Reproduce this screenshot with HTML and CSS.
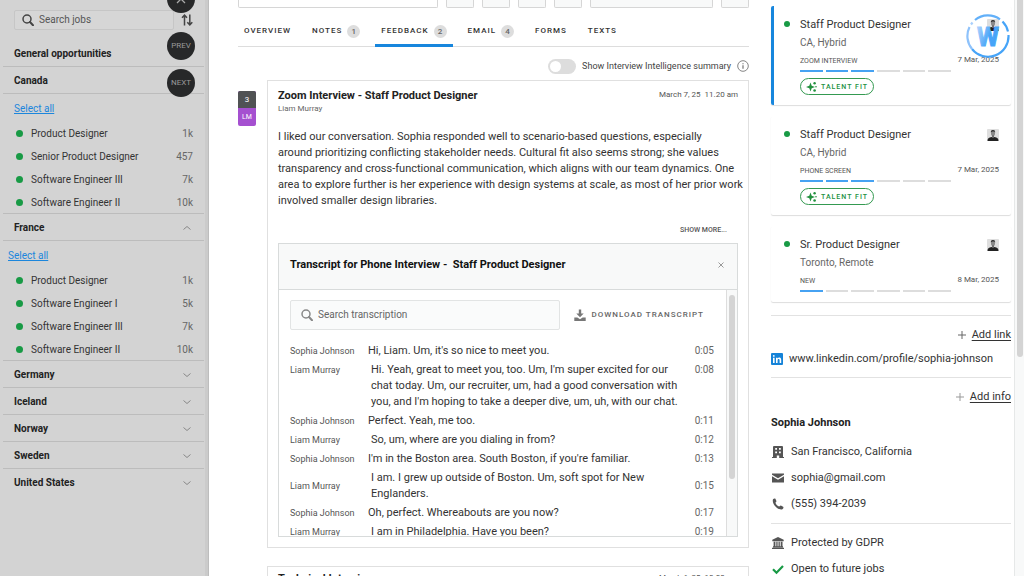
FILE: index.html
```
<!DOCTYPE html>
<html lang="en">
<head>
<meta charset="UTF-8">
<meta name="viewport" content="width=device-width, initial-scale=1.0">
<title>Sophia Johnson - Feedback</title>
<link rel="stylesheet" href="styles.css">
</head>
<body>

<!-- Shared icons -->
<svg class="sprite" aria-hidden="true">
  <symbol id="i-search" viewBox="0 0 12 12"><circle cx="5" cy="5" r="4" fill="none" stroke="currentColor" stroke-width="1.5"/><path d="M8 8l3 3.2" stroke="currentColor" stroke-width="2" stroke-linecap="round"/></symbol>
  <symbol id="i-down" viewBox="0 0 8 8"><path d="M.5 2.500l3.500 3 3.500-3" fill="none" stroke="currentColor"/></symbol>
  <symbol id="i-up" viewBox="0 0 8 8"><path d="M.5 5.500l3.500-3 3.500 3" fill="none" stroke="currentColor"/></symbol>
  <symbol id="i-avatar" viewBox="0 0 12 12"><rect width="12" height="12" rx="1" fill="#dedede"/><path d="M4 3.2C4 .4 8 .4 8 3.2V5c0 1-1 2.3-2 2.3S4 6 4 5z" fill="#8a8a8a"/><path d="M3.8 3.5C3.6.3 8.4.3 8.2 3.5L7.4 2.6H5z" fill="#2b2b2b"/><path d="M5.2 6.5h1.6v2H5.2z" fill="#555"/><path d="M.5 12c0-2.800 1.200-3.400 4.100-4l1.400.8L7.400 8c2.900.6 4.100 1.200 4.100 4z" fill="#222"/></symbol>
  <symbol id="i-spark" viewBox="0 0 12 12"><path d="M4.500 1.500l1.200 3.300L9 6 5.700 7.200 4.500 10.500 3.300 7.200 0 6l3.300-1.200z" fill="currentColor"/><circle cx="8.600" cy="2.300" r="1.200" fill="currentColor"/><circle cx="10" cy="5.800" r=".8" fill="currentColor"/><circle cx="8.600" cy="9.500" r="1.300" fill="currentColor"/></symbol>
</svg>

<div class="app">

  <aside class="sidebar">
    <div class="job-search">
      <label class="job-search-box">
        <svg class="icon-12"><use href="#i-search"/></svg>
        <input type="text" placeholder="Search jobs" aria-label="Search jobs">
      </label>
      <button class="sort" aria-label="Sort jobs">
        <svg viewBox="0 0 12 12" width="12" height="12"><path d="M3.500 11.500V1.200M1 3.800L3.500 1.200 6 3.800M8.800.5v10.300M6.300 8.200l2.500 2.600 2.500-2.600" fill="none" stroke="#444" stroke-width="1.500"/></svg>
      </button>
    </div>

    <button class="group">General opportunities</button>

    <button class="group">Canada</button>
    <div class="group-body">
      <a class="select-all" href="#">Select all</a>
      <ul>
        <li><i class="dot"></i>Product Designer<span>1k</span></li>
        <li><i class="dot"></i>Senior Product Designer<span>457</span></li>
        <li><i class="dot"></i>Software Engineer III<span>7k</span></li>
        <li><i class="dot"></i>Software Engineer II<span>10k</span></li>
      </ul>
    </div>

    <button class="group">France <svg class="icon-8"><use href="#i-up"/></svg></button>
    <div class="group-body">
      <a class="select-all outdent" href="#">Select all</a>
      <ul>
        <li><i class="dot"></i>Product Designer<span>1k</span></li>
        <li><i class="dot"></i>Software Engineer I<span>5k</span></li>
        <li><i class="dot"></i>Software Engineer III<span>7k</span></li>
        <li><i class="dot"></i>Software Engineer II<span>10k</span></li>
      </ul>
    </div>

    <button class="group">Germany <svg class="icon-8"><use href="#i-down"/></svg></button>
    <button class="group">Iceland <svg class="icon-8"><use href="#i-down"/></svg></button>
    <button class="group">Norway <svg class="icon-8"><use href="#i-down"/></svg></button>
    <button class="group">Sweden <svg class="icon-8"><use href="#i-down"/></svg></button>
    <button class="group last">United States <svg class="icon-8"><use href="#i-down"/></svg></button>

    <!-- Floating candidate navigation -->
    <div class="pager">
      <button class="close-btn" aria-label="Close"><svg viewBox="0 0 10 10" width="10" height="10"><path d="M1 1l8 8M9 1L1 9" stroke="#aaa" stroke-width="1.300"/></svg></button>
      <button>PREV</button>
      <button>NEXT</button>
    </div>
  </aside>

  <main class="main">
    <div class="toolbar">
      <input class="tool-field" type="text" aria-label="Stage">
      <button class="tool" aria-label="Email"></button>
      <button class="tool" aria-label="Schedule"></button>
      <button class="tool" aria-label="Share"></button>
      <button class="tool" aria-label="Print"></button>
      <button class="tool wide" aria-label="Move"></button>
      <button class="tool" aria-label="More"></button>
    </div>

    <nav class="tabs">
      <a href="#">OVERVIEW</a>
      <a href="#">NOTES<span class="count">1</span></a>
      <a class="active" href="#">FEEDBACK<span class="count">2</span></a>
      <a href="#">EMAIL<span class="count">4</span></a>
      <a href="#">FORMS</a>
      <a href="#">TEXTS</a>
    </nav>

    <div class="summary-toggle">
      <input type="checkbox" id="summary" class="switch">
      <label for="summary">Show Interview Intelligence summary</label>
      <svg viewBox="0 0 12 12" width="12" height="12"><circle cx="6" cy="6" r="5.300" fill="none" stroke="#777" stroke-width=".9"/><path d="M6 5.200v3.500M6 3.200v1" stroke="#666" stroke-width="1.100"/></svg>
    </div>

    <div class="feed">
      <div class="score"><b>3</b><span>LM</span></div>

      <article class="card">
        <header class="card-head">
          <div>
            <h2>Zoom Interview - Staff Product Designer</h2>
            <p class="author">Liam Murray</p>
          </div>
          <time>March 7, 25&nbsp; 11.20 am</time>
        </header>
        <p class="note">I liked our conversation. Sophia responded well to scenario-based questions, especially<br>
          around prioritizing conflicting stakeholder needs. Cultural fit also seems strong; she values<br>
          transparency and cross-functional communication, which aligns with our team dynamics. One<br>
          area to explore further is her experience with design systems at scale, as most of her prior work<br>
          involved smaller design libraries.</p>
        <button class="more">SHOW MORE...</button>

        <section class="transcript">
          <header class="transcript-head">
            <h3>Transcript for Phone Interview -&nbsp; Staff Product Designer</h3>
            <button aria-label="Close transcript"><svg viewBox="0 0 8 8" width="8" height="8"><path d="M1.500 1.500l5 5M6.500 1.500l-5 5" stroke="#999"/></svg></button>
          </header>
          <div class="transcript-view">
            <div class="transcript-body">
              <div class="tools">
                <label class="find">
                  <svg class="icon-12"><use href="#i-search"/></svg>
                  <input type="text" placeholder="Search transcription" aria-label="Search transcription">
                </label>
                <button class="download">
                  <svg viewBox="0 0 12 12" width="12" height="12"><path d="M4.800.5h2.400v4h2.500L6 8.300 2.300 4.500h2.500z" fill="#777"/><path d="M.3 8.500h3L6 10.200l2.700-1.700h3V12H.3z" fill="#777"/></svg>
                  DOWNLOAD TRANSCRIPT
                </button>
              </div>
              <div class="line"><span>Sophia Johnson</span><p>Hi, Liam. Um, it's so nice to meet you.</p><time>0:05</time></div>
              <div class="line liam"><span>Liam Murray</span><p>Hi. Yeah, great to meet you, too. Um, I'm super excited for our chat today. Um, our recruiter, um, had a good conversation with you, and I'm hoping to take a deeper dive, um, uh, with our chat.</p><time>0:08</time></div>
              <div class="line"><span>Sophia Johnson</span><p>Perfect. Yeah, me too.</p><time>0:11</time></div>
              <div class="line liam"><span>Liam Murray</span><p>So, um, where are you dialing in from?</p><time>0:12</time></div>
              <div class="line"><span>Sophia Johnson</span><p>I'm in the Boston area. South Boston, if you're familiar.</p><time>0:13</time></div>
              <div class="line liam middle"><span>Liam Murray</span><p>I am. I grew up outside of Boston. Um, soft spot for New Englanders.</p><time>0:15</time></div>
              <div class="line"><span>Sophia Johnson</span><p>Oh, perfect. Whereabouts are you now?</p><time>0:17</time></div>
              <div class="line liam"><span>Liam Murray</span><p>I am in Philadelphia. Have you been?</p><time>0:19</time></div>
            </div>
            <div class="track"><div class="thumb"></div></div>
          </div>
        </section>
      </article>

      <article class="card next">
        <header class="card-head">
          <h2>Technical Interview</h2>
          <time>March 6, 25&nbsp; 10.00 am</time>
        </header>
      </article>
    </div>
  </main>

  <aside class="profile">
    <div class="profile-body">
      <div class="job current">
        <i class="dot"></i>
        <div class="job-info">
          <div class="job-row"><h4>Staff Product Designer</h4><svg class="icon-12"><use href="#i-avatar"/></svg></div>
          <p>CA, Hybrid</p>
          <div class="job-row">
            <div class="stage">ZOOM INTERVIEW<div class="steps"><i class="on"></i><i class="on"></i><i class="on"></i><i></i><i></i><i></i></div></div>
            <time>7 Mar, 2025</time>
          </div>
          <span class="fit"><svg class="icon-12"><use href="#i-spark"/></svg>TALENT FIT</span>
        </div>
      </div>

      <div class="job">
        <i class="dot"></i>
        <div class="job-info">
          <div class="job-row"><h4>Staff Product Designer</h4><svg class="icon-12"><use href="#i-avatar"/></svg></div>
          <p>CA, Hybrid</p>
          <div class="job-row">
            <div class="stage">PHONE SCREEN<div class="steps"><i class="on"></i><i class="on"></i><i class="on"></i><i></i><i></i><i></i></div></div>
            <time>7 Mar, 2025</time>
          </div>
          <span class="fit"><svg class="icon-12"><use href="#i-spark"/></svg>TALENT FIT</span>
        </div>
      </div>

      <div class="job compact">
        <i class="dot"></i>
        <div class="job-info">
          <div class="job-row"><h4>Sr. Product Designer</h4><svg class="icon-12"><use href="#i-avatar"/></svg></div>
          <p>Toronto, Remote</p>
          <div class="job-row">
            <div class="stage">NEW<div class="steps"><i class="on"></i><i></i><i></i><i></i><i></i><i></i></div></div>
            <time>8 Mar, 2025</time>
          </div>
        </div>
      </div>

      <div class="block">
        <div class="add"><svg viewBox="0 0 8 8" width="8" height="8"><path d="M4 0v8M0 4h8" stroke="#666"/></svg><a href="#">Add link</a></div>
        <div class="link">
          <svg viewBox="0 0 12 12" width="12" height="12"><rect width="12" height="12" rx="1" fill="#1583d8"/><path d="M2 4.700h1.600V10H2zM5 4.700h1.500v.7c.9-1.300 3.700-1.100 3.700 1.300V10H8.600V7.200c0-1.600-2-1.500-2 0V10H5z" fill="#fff"/><circle cx="2.800" cy="2.900" r=".9" fill="#fff"/></svg>
          <a href="#">www.linkedin.com/profile/sophia-johnson</a>
        </div>
      </div>

      <div class="block">
        <div class="add"><svg viewBox="0 0 8 8" width="8" height="8"><path d="M4 0v8M0 4h8" stroke="#999"/></svg><a href="#">Add info</a></div>
        <h3>Sophia Johnson</h3>
        <ul class="facts">
          <li><svg class="icon-12" viewBox="0 0 12 12"><path fill-rule="evenodd" d="M2 0h8q1 0 1 1v10h1v1H7.200V9.500H4.800V12H0v-1h1V1q0-1 1-1zM3.200 2v1.800H5V2zM7 2v1.800h1.800V2zM3.200 5.500v1.800H5V5.500zM7 5.500v1.800h1.800V5.500z" fill="#555"/></svg>San Francisco, California</li>
          <li><svg class="icon-12" viewBox="0 0 12 12"><path d="M0 1.500h12v1.300L6 6.300 0 2.800zM0 4.200l6 3.500 6-3.500v6.300H0z" fill="#555"/></svg>sophia@gmail.com</li>
          <li><svg class="icon-12" viewBox="0 0 12 12"><path d="M1 1.300C1.800.2 3 .2 3.400.8l1 2.300c.2.700-.9 1.200-.9 1.600.4 1.500 1.900 3.100 3.700 3.900.5 0 1-1.200 1.700-1l2.200 1.200c.8.500.2 1.700-.7 2.400C6 12.800-.6 5.500 1 1.300z" fill="#555"/></svg>(555) 394-2039</li>
        </ul>
      </div>

      <div class="block">
        <ul class="facts first">
          <li><svg class="icon-12" viewBox="0 0 12 12"><path d="M6 0l5.700 2.800v1.400H.3V2.800zM1.600 4.800h1.800v4.500H1.600zM4.300 4.800h1.300v4.500H4.300zM6.500 4.800h1.300v4.500H6.500zM8.700 4.800h1.800v4.500H8.700zM1 9.200h10v1.200H1zM0 10.800h12V12H0z" fill="#555"/></svg>Protected by GDPR</li>
          <li><svg class="icon-12" viewBox="0 0 12 12"><path d="M1 6.200l3.500 3.500L11 3" fill="none" stroke="#189a45" stroke-width="2.200"/></svg>Open to future jobs</li>
        </ul>
      </div>
    </div>
    <div class="page-track"><div class="page-thumb"></div></div>

    <svg class="brand" viewBox="0 0 44 44" role="img" aria-label="W">
      <defs><linearGradient id="blue" x1="0" y1="0" x2="1" y2=".5"><stop offset=".1" stop-color="#a9cffc"/><stop offset=".65" stop-color="#46a4f8"/></linearGradient></defs>
      <g fill="none" stroke-width="2.200">
        <path d="M9 6A20.500 20.500 0 0 1 34 5.400" stroke="#62b0f9"/>
        <path d="M36.500 7.500A20.500 20.500 0 0 1 42 17.500" stroke="#46a4f8"/>
        <path d="M42.500 21A20.500 20.500 0 0 1 6 35" stroke="#46a4f8"/>
        <path d="M6 35A20.500 20.500 0 0 1 3.500 13" stroke="#8ec2fb"/>
        <path d="M5 10.500l1.500-2" stroke="#a9cffc"/>
      </g>
      <text x="22" y="32" text-anchor="middle" fill="url(#blue)" stroke="url(#blue)">W</text>
    </svg>
  </aside>

</div>
</body>
</html>
```
FILE: styles.css
```
* {
  box-sizing: border-box;
}

body {
  margin: 0;
  font-family: Roboto, "Liberation Sans", sans-serif;
  font-size: 11px;
  line-height: 16px;
  color: #333;
  background: #fff;
}

h2, h3, h4, p, ul {
  margin: 0;
  padding: 0;
}

ul { list-style: none; }

button, input {
  font: inherit;
  color: inherit;
  background: none;
  border: 0;
  padding: 0;
}

input::placeholder { color: #666; opacity: 1; }

svg { flex: none; display: block; }
.sprite { position: absolute; width: 0; height: 0; }
.icon-12 { width: 12px; height: 12px; }
.icon-8 { width: 8px; height: 8px; }

.app {
  display: flex;
  height: 100vh;
  overflow: hidden;
}

/* Sidebar */
.sidebar {
  position: relative;
  flex: none;
  width: 209px;
  padding: 10px 4px 0 3px;
  background: #d3d3d3;
  border-right: 1px solid #bdbdbd;
  box-shadow: inset -3px 0 0 #cbcbcb;
  font-size: 10px;
}

.job-search {
  display: flex;
  align-items: center;
  gap: 7px;
  padding: 0 11px 10px;
}

.job-search-box {
  flex: 1;
  min-width: 0;
  display: flex;
  align-items: center;
  gap: 5px;
  height: 20px;
  padding: 0 7px;
  color: #444;
  background: #d6d6d6;
  border: 1px solid #c6c6c6;
  border-radius: 2px;
}
.job-search-box input { flex: 1; min-width: 0; }
.job-search-box input::placeholder { color: #555; }

.group {
  display: flex;
  align-items: center;
  justify-content: space-between;
  width: 100%;
  height: 27px;
  padding: 1px 13px 0 11px;
  border-bottom: 1px solid #bcbcbc;
  font-weight: 700;
  text-align: left;
  color: #222;
}
.group svg { color: #888; }
.group.last { border-bottom: 0; }

.group-body {
  height: 120px;
  border-bottom: 1px solid #bcbcbc;
}

.select-all {
  display: block;
  height: 28px;
  padding-left: 11px;
  line-height: 30px;
  color: #1c86dc;
}
.select-all.outdent { padding-left: 5px; }

.group-body li {
  display: flex;
  align-items: center;
  height: 23px;
  padding: 0 11px 0 13px;
}
.group-body li .dot { margin-right: 8px; }
.group-body li span {
  margin-left: auto;
  color: #666;
}

.dot {
  flex: none;
  width: 7px;
  height: 7px;
  border-radius: 50%;
  background: #189a45;
}

.pager {
  position: absolute;
  top: -15px;
  left: 167px;
  display: grid;
  gap: 9px;
}
.pager button {
  display: flex;
  align-items: center;
  justify-content: center;
  width: 28px;
  height: 28px;
  border-radius: 50%;
  background: #272829;
  color: #999;
  font-size: 8px;
}
.pager .close-btn { margin-bottom: 10px; }

/* Candidate */
.main {
  flex: 1;
  min-width: 0;
  padding-left: 29px;
}

.toolbar {
  display: flex;
  gap: 8px;
}
.tool, .tool-field {
  width: 28px;
  height: 8px;
  border: 1px solid #d6d6d6;
  border-top: 0;
  border-radius: 0 0 2px 2px;
  background: #f8f9f9;
}
.tool.wide { width: 123px; }
.tool-field { flex: 1; min-width: 0; background: #fff; }

.tabs {
  display: flex;
  gap: 9px;
  height: 39px;
  padding-top: 8px;
  border-bottom: 1px solid #ddd;
}
.tabs a {
  display: flex;
  align-items: center;
  padding: 2px 6px 0;
  height: 31px;
  border-bottom: 3px solid transparent;
  font-size: 8px;
  font-weight: 500;
  letter-spacing: 1px;
  color: #333;
  text-decoration: none;
}
.tabs .active { border-color: #1786dd; }
.count {
  width: 13px;
  height: 13px;
  margin-left: 5px;
  border-radius: 50%;
  background: #ddd;
  line-height: 13px;
  letter-spacing: 0;
  text-align: center;
  color: #666;
}

.summary-toggle {
  display: flex;
  align-items: center;
  justify-content: flex-end;
  gap: 6px;
  height: 33px;
  padding-top: 5px;
  font-size: 9px;
  color: #444;
}
.switch {
  appearance: none;
  width: 28px;
  height: 15px;
  margin: 0;
  padding: 2px;
  border-radius: 8px;
  background: #ddd;
}
.switch::before {
  content: '';
  display: block;
  width: 11px;
  height: 11px;
  border-radius: 50%;
  background: #fff;
}

.feed {
  display: grid;
  grid-template-columns: 18px minmax(0, 1fr);
  column-gap: 11px;
  row-gap: 18px;
}

.score {
  align-self: start;
  margin-top: 11px;
  border-radius: 2px;
  overflow: hidden;
  font-size: 8px;
  line-height: 17px;
  text-align: center;
  color: #fff;
  background: #a550d0;
}
.score b {
  display: block;
  font-weight: 400;
  background: #505254;
}
.score span { font-size: 7px; }

.card {
  padding: 7px 10px 10px;
  border: 1px solid #e0e0e0;
}
.card.next { grid-column: 2; height: 60px; padding-top: 4px; }

.card-head {
  display: flex;
  justify-content: space-between;
}
.card-head h2 {
  font-size: 11px;
  font-weight: 700;
  color: #222;
}
.card-head time { font-size: 8px; line-height: 14px; color: #555; }
.author {
  font-size: 8px;
  line-height: 9px;
  color: #666;
}

.note {
  margin-top: 16px;
  white-space: nowrap;
}

.more {
  display: block;
  margin: 13px 11px 5px auto;
  font-size: 7px;
  font-weight: 500;
  color: #555;
}

.transcript {
  border: 1px solid #d8dbdb;
}
.transcript-head {
  display: flex;
  align-items: center;
  justify-content: space-between;
  height: 46px;
  padding: 0 12px 4px 11px;
  background: #f8f9f9;
  border-bottom: 1px solid #d8dbdb;
}
.transcript-head h3 {
  font-size: 11px;
  color: #111;
}

.transcript-view {
  display: flex;
  height: 246px;
  overflow: hidden;
}
.transcript-body {
  flex: 1;
  min-width: 0;
  padding: 10px 12px 0 11px;
}
.track {
  width: 11px;
  padding: 5px 2px;
  border-left: 1px solid #ddd;
  background: #f8f9f9;
}
.thumb {
  width: 6px;
  height: 184px;
  border-radius: 3px;
  background: #d4d4d4;
}

.tools {
  display: flex;
  align-items: center;
  gap: 14px;
  margin-bottom: 13px;
}
.find {
  flex: 1;
  min-width: 0;
  display: flex;
  align-items: center;
  gap: 5px;
  height: 30px;
  padding: 0 10px;
  border: 1px solid #e2e4e4;
  border-radius: 2px;
  background: #fafbfb;
  color: #888;
  font-size: 10px;
}
.find input { flex: 1; min-width: 0; }
.download {
  display: flex;
  align-items: center;
  gap: 5px;
  margin-right: 10px;
  font-size: 8px;
  font-weight: 500;
  letter-spacing: 1px;
  color: #666;
}

.line {
  display: grid;
  grid-template-columns: 78px minmax(0, 1fr) 20px;
  margin-bottom: 3px;
}
.line span { font-size: 9px; color: #555; }
.line time {
  font-size: 10px;
  text-align: right;
  color: #666;
}
.line p { padding-right: 8px; }
.line.liam p { padding-left: 3px; }
.line.middle { align-items: center; }

/* Profile column */
.profile {
  position: relative;
  flex: none;
  display: flex;
  width: 275px;
  padding-left: 22px;
}
.profile-body {
  flex: 1;
  min-width: 0;
  padding: 6px 3px 0 0;
}

.job {
  display: flex;
  margin-bottom: 11px;
  padding: 10px 12px 10px 10px;
  border-left: 3px solid transparent;
  border-radius: 2px;
  box-shadow: 0 1px 1px #ddd;
}
.job.current { border-left-color: #1786dd; }
.job.compact { padding-bottom: 4px; }
.job .dot {
  width: 6px;
  height: 6px;
  margin: 5px 10px 0 0;
}
.job-info { flex: 1; min-width: 0; }
.job-row {
  display: flex;
  justify-content: space-between;
  align-items: center;
}
.job h4 {
  font-size: 11px;
  font-weight: 400;
  line-height: 18px;
}
.job p {
  font-size: 10px;
  line-height: 18px;
  color: #666;
}
.stage {
  width: 151px;
  padding-bottom: 6px;
  font-size: 7px;
  color: #555;
}
.job-row time {
  padding-bottom: 10px;
  font-size: 8px;
  color: #555;
}
.steps {
  display: grid;
  grid-template-columns: repeat(6, 1fr);
  gap: 3px;
  margin-top: 1px;
}
.steps i {
  height: 2px;
  background: #ddd;
}
.steps .on { background: #46a2f2; }

.fit {
  display: flex;
  align-items: center;
  gap: 3px;
  width: 74px;
  height: 17px;
  padding-left: 5px;
  border: 1px solid #349a51;
  border-radius: 9px;
  font-size: 7px;
  font-weight: 500;
  letter-spacing: 1px;
  white-space: nowrap;
  color: #23913f;
}

.block { border-top: 1px solid #e2e2e2; }
.job + .block { margin-top: 13px; }

.add {
  display: flex;
  align-items: center;
  justify-content: flex-end;
  gap: 6px;
  height: 16px;
  margin-top: 11px;
}
.add a { color: #333; text-underline-offset: 2px; }

.link {
  display: flex;
  align-items: center;
  gap: 6px;
  margin: 8px 0 10px;
}
.link a { color: #333; text-decoration: none; }

.block h3 {
  margin-top: 10px;
  font-size: 11px;
  color: #222;
}

.facts {
  margin-top: 8px;
  padding-bottom: 6px;
}
.facts.first { margin-top: 6px; }
.facts li {
  display: flex;
  align-items: center;
  gap: 7px;
  height: 26px;
  padding-left: 1px;
}

.page-track {
  width: 10px;
  padding-left: 2px;
  border-left: 1px solid #e6e8e8;
  background: #f8f9f9;
}
.page-thumb {
  width: 6px;
  height: 62vh;
  border-radius: 0 0 3px 3px;
  background: #d4d4d4;
}

.brand {
  position: absolute;
  top: 14px;
  right: 14px;
  width: 44px;
  height: 44px;
}
.brand text {
  font-size: 25px;
  font-weight: 700;
}
```
